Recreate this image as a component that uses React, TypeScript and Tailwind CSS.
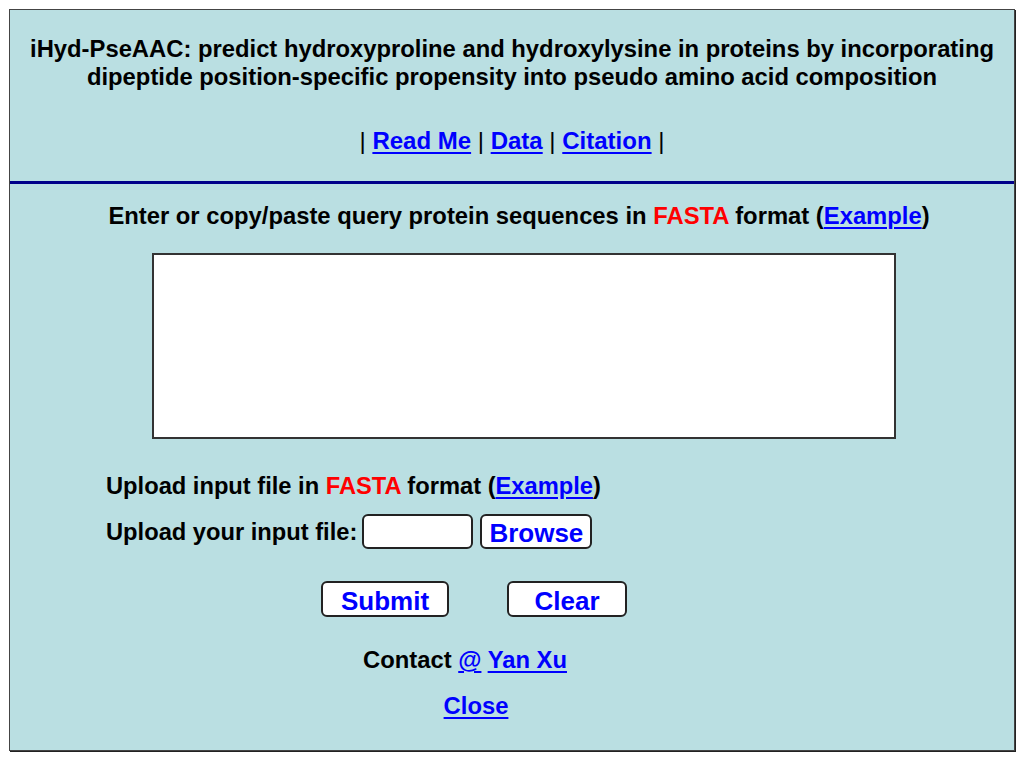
import React from "react"

const LINK = "text-[#0000ff] underline underline-offset-[3px] decoration-[1.5px]"

function Btn({ children, w }: { children: React.ReactNode; w: string }) {
  return (
    <button
      className={`${w} bg-white border-2 border-[#222] rounded-[6px] text-[#0000ff] text-[26px] font-bold leading-none pt-[3px]`}
    >
      {children}
    </button>
  )
}

export default function App() {
  return (
    <div className="w-[1024px] h-[761px] bg-white pt-[9px] pl-[9px] font-['Liberation_Sans',Arial,sans-serif] font-bold text-black">
      <div className="w-[1006px] h-[742px] bg-[#badfe2] border border-[#444] shadow-[1px_1px_0_#222]">
        <div className="pt-[25px] text-center text-[23.8px] leading-[28px]">
          <p>iHyd-PseAAC: predict hydroxyproline and hydroxylysine in proteins by incorporating</p>
          <p>dipeptide position-specific propensity into pseudo amino acid composition</p>
        </div>
        <p className="mt-[36px] text-center text-[24px] leading-[28px] font-normal">
          | <a className={`${LINK} font-bold`} href="#">Read Me</a> |{" "}
          <a className={`${LINK} font-bold`} href="#">Data</a> |{" "}
          <a className={`${LINK} font-bold`} href="#">Citation</a> |
        </p>
        <div className="mt-[26px] h-[3px] bg-[#00008a]" />
        <p className="mt-[18px] text-center pl-[14px] text-[23.8px] leading-[28px]">
          Enter or copy/paste query protein sequences in <span className="text-[#ff0000]">FASTA</span> format (
          <a className={LINK} href="#">Example</a>)
        </p>
        <textarea className="block mt-[23px] ml-[142px] w-[744px] h-[186px] bg-white border-2 border-[#333] resize-none outline-none" />
        <div className="pl-[96px] text-[23.7px] leading-[28px]">
          <p className="mt-[33px]">
            Upload input file in <span className="text-[#ff0000]">FASTA</span> format (
            <a className={LINK} href="#">Example</a>)
          </p>
          <div className="mt-[14px] flex items-center h-[35px]">
            <span>Upload your input file:</span>
            <div className="ml-[5px] w-[111px] h-[35px] bg-white border-2 border-[#222] rounded-[6px]" />
            <Btn w="ml-[7px] w-[112px] h-[35px]">Browse</Btn>
          </div>
        </div>
        <div className="mt-[32px] flex pl-[311px] gap-[58px]">
          <Btn w="w-[128px] h-[36px]">Submit</Btn>
          <Btn w="w-[120px] h-[36px]">Clear</Btn>
        </div>
        <p className="mt-[29px] text-center pr-[94px] text-[23.8px] leading-[28px]">
          Contact <a className={LINK} href="#">@</a> <a className={LINK} href="#">Yan Xu</a>
        </p>
        <p className="mt-[18px] text-center pr-[72px] text-[23.8px] leading-[28px]">
          <a className={LINK} href="#">Close</a>
        </p>
      </div>
    </div>
  )
}
